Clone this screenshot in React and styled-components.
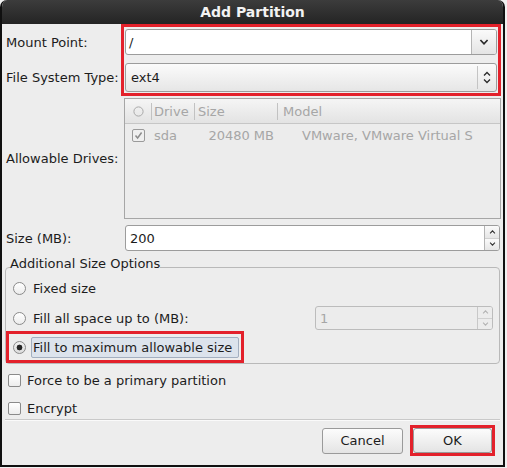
import React from 'react';
import styled, { createGlobalStyle } from 'styled-components';

const GlobalStyle = createGlobalStyle`
  body {
    margin: 0;
    background: #f1f1f1;
    font-family: "DejaVu Sans", "Liberation Sans", sans-serif;
    font-size: 13px;
    color: #1c1c1c;
  }
`;

const RED = '#e3212b';

const Dialog = styled.div`
  width: 505px;
  height: 467px;
  box-sizing: border-box;
  display: flex;
  flex-direction: column;
  border: 2px solid #101010;
  border-top: 0;
  border-radius: 7px 7px 0 0;
  overflow: hidden;
  background: #ededed;
`;

const TitleBar = styled.div`
  height: 24px;
  flex-shrink: 0;
  background: linear-gradient(#3c3c3c, #242424);
  color: #f2f2f2;
  font-weight: bold;
  font-size: 14px;
  line-height: 24px;
  text-align: center;
`;

const Body = styled.div`
  flex: 1;
  display: flex;
  flex-direction: column;
  padding: 0 2px 0 4px;
`;

const TopBlock = styled.div`
  display: flex;
`;

const LabelColumn = styled.div`
  width: 115px;
  display: flex;
  flex-direction: column;
  gap: 8px;
  padding-top: 5px;
`;

const FieldLabel = styled.div`
  height: ${p => p.$h}px;
  width: ${p => (p.$w ? `${p.$w}px` : 'auto')};
  flex-shrink: 0;
  display: flex;
  align-items: center;
  white-space: nowrap;
`;

const Highlight = styled.div`
  flex: 1;
  display: flex;
  flex-direction: column;
  gap: 8px;
  padding: 2px 1px 1px;
  border: 3px solid ${RED};
`;

const ComboEntry = styled.div`
  height: 26px;
  box-sizing: border-box;
  display: flex;
  border: 1px solid #9c9c9c;
  border-radius: 3px;
  background: #fff;
  overflow: hidden;
`;

const EntryText = styled.div`
  flex: 1;
  display: flex;
  align-items: center;
  padding-left: ${p => p.$pad || 3}px;
  color: ${p => (p.$disabled ? '#a6a6a6' : '#1c1c1c')};
`;

const ComboButton = styled.div`
  width: 24px;
  display: flex;
  align-items: center;
  justify-content: center;
  border-left: 1px solid #b4b4b4;
  background: linear-gradient(#fafafa, #e4e4e4);
`;

const ComboBox = styled.div`
  height: 29px;
  box-sizing: border-box;
  display: flex;
  align-items: center;
  border: 1px solid #9c9c9c;
  border-radius: 3px;
  background: linear-gradient(#fbfbfb, #e6e6e6);
`;

const ComboValue = styled.div`
  flex: 1;
  padding-left: 5px;
`;

const ComboArrows = styled.div`
  width: 18px;
  height: 23px;
  display: flex;
  align-items: center;
  justify-content: center;
  border-left: 1px solid #c4c4c4;
`;

const DrivesRow = styled.div`
  display: flex;
  align-items: center;
  margin-top: 2px;
`;

const DriveList = styled.div`
  flex: 1;
  height: 121px;
  margin-left: 3px;
  box-sizing: border-box;
  border: 1px solid #a6a6a6;
  background: #ececec;
  color: #a6a6a6;
`;

const columns = '26px 43px 83px 1fr';

const ListHeader = styled.div`
  height: 25px;
  box-sizing: border-box;
  display: grid;
  grid-template-columns: ${columns};
  align-items: center;
  border-bottom: 1px solid #c6c6c6;
  background: linear-gradient(#f5f5f5, #e3e3e3);
`;

const HeaderCell = styled.div`
  height: 17px;
  display: flex;
  align-items: center;
  justify-content: ${p => (p.$center ? 'center' : 'flex-start')};
  padding-left: ${p => p.$pad || 0}px;
  border-left: ${p => (p.$sep ? '1px solid #c2c2c2' : '0')};
`;

const ListRow = styled.div`
  height: 22px;
  display: grid;
  grid-template-columns: ${columns};
  align-items: center;
`;

const Cell = styled.div`
  display: flex;
  justify-content: ${p => p.$justify || 'flex-start'};
  padding-left: ${p => p.$pl || 0}px;
  padding-right: ${p => p.$pr || 0}px;
  white-space: nowrap;
  overflow: hidden;
`;

const SizeRow = styled.div`
  display: flex;
  align-items: center;
  margin-top: 6px;
`;

const SpinEntry = styled.div`
  height: ${p => p.$h || 26}px;
  width: ${p => (p.$w ? `${p.$w}px` : 'auto')};
  flex: ${p => (p.$w ? '0 0 auto' : 1)};
  box-sizing: border-box;
  display: flex;
  margin: ${p => p.$m || '0'};
  border: 1px solid ${p => (p.$disabled ? '#bcbcbc' : '#9c9c9c')};
  border-radius: 3px;
  background: ${p => (p.$disabled ? '#ececec' : '#fff')};
  overflow: hidden;
`;

const SpinButtons = styled.div`
  width: 14px;
  display: flex;
  flex-direction: column;
  border-left: 1px solid ${p => (p.$disabled ? '#c8c8c8' : '#b4b4b4')};
`;

const SpinHalf = styled.div`
  flex: 1;
  display: flex;
  align-items: center;
  justify-content: center;
  background: ${p => (p.$disabled ? '#ececec' : 'linear-gradient(#fafafa, #e6e6e6)')};
  & + & {
    border-top: 1px solid ${p => (p.$disabled ? '#d0d0d0' : '#c0c0c0')};
  }
`;

const Frame = styled.fieldset`
  margin: 4px 1px 0 -1px;
  padding: 0;
  border: 1px solid #b9b9b9;
  border-radius: 4px;
  display: flex;
  flex-direction: column;
  min-width: 0;
`;

const Legend = styled.legend`
  margin-left: 4px;
  padding: 0 0 6px;
  line-height: 18px;
`;

const RadioRow = styled.div`
  height: ${p => p.$h}px;
  margin-top: ${p => p.$mt || 0}px;
  display: flex;
  align-items: center;
  padding-left: 7px;
  gap: 7px;
`;

const Radio = styled.span`
  width: 13px;
  height: 13px;
  box-sizing: border-box;
  flex-shrink: 0;
  border: 1px solid #8a8a8a;
  border-radius: 50%;
  background: ${p =>
    p.$checked
      ? 'radial-gradient(circle, #262626 0 2.6px, transparent 3.2px), linear-gradient(#f0f0f0, #dcdcdc)'
      : 'linear-gradient(#ffffff, #ececec)'};
`;

const Spacer = styled.div`
  flex: 1;
`;

const FocusBox = styled.div`
  margin-top: 1px;
  align-self: flex-start;
  height: 32px;
  box-sizing: border-box;
  display: flex;
  align-items: center;
  gap: 5px;
  padding: 0 2px 0 4px;
  border: 3px solid ${RED};
`;

const FocusLabel = styled.div`
  height: 21px;
  box-sizing: border-box;
  display: flex;
  align-items: center;
  padding: 0 6px 0 1px;
  border: 1px solid #a3afc0;
  border-radius: 2px;
  background: #dce3ec;
`;

const CheckRow = styled.div`
  height: 20px;
  margin-top: ${p => p.$mt}px;
  display: flex;
  align-items: center;
  gap: 6px;
  padding-left: 2px;
`;

const CheckBox = styled.span`
  width: 13px;
  height: 13px;
  box-sizing: border-box;
  flex-shrink: 0;
  display: flex;
  align-items: center;
  justify-content: center;
  border: 1px solid ${p => (p.$disabled ? '#9a9a9a' : '#8a8a8a')};
  border-radius: 2px;
  background: ${p => (p.$disabled ? '#efefef' : 'linear-gradient(#ffffff, #ededed)')};
`;

const Separator = styled.div`
  height: 1px;
  margin: 1px 1px 0 -1px;
  background: #c9c9c9;
  box-shadow: 0 1px 0 #fafafa;
`;

const ButtonRow = styled.div`
  margin-top: 5px;
  display: flex;
  justify-content: flex-end;
  align-items: center;
  gap: 7px;
  padding-right: 6px;
`;

const Button = styled.button`
  width: ${p => p.$w}px;
  height: ${p => p.$h}px;
  box-sizing: border-box;
  border: 1px solid #9a9a9a;
  border-radius: 3px;
  background: linear-gradient(#fcfcfc, #e4e4e4);
  font: inherit;
  color: #1c1c1c;
  padding: 0;
`;

const ButtonHighlight = styled.div`
  width: 85px;
  height: 31px;
  box-sizing: border-box;
  display: flex;
  border: 3px solid ${RED};
`;

const Chevron = ({ up, color = '#2a2a2a', w = 8, h = 5 }) => (
  <svg width={w} height={h} viewBox="0 0 8 5">
    <polyline
      points={up ? '1,4.2 4,1 7,4.2' : '1,0.8 4,4 7,0.8'}
      fill="none"
      stroke={color}
      strokeWidth="1.4"
    />
  </svg>
);

const SpinControl = ({ value, disabled, ...rest }) => {
  const c = disabled ? '#b4b4b4' : '#333';
  return (
    <SpinEntry $disabled={disabled} {...rest}>
      <EntryText $pad={4} $disabled={disabled}>{value}</EntryText>
      <SpinButtons $disabled={disabled}>
        <SpinHalf $disabled={disabled}><Chevron up color={c} w={7} h={4} /></SpinHalf>
        <SpinHalf $disabled={disabled}><Chevron color={c} w={7} h={4} /></SpinHalf>
      </SpinButtons>
    </SpinEntry>
  );
};

const Tick = () => (
  <svg width="9" height="9" viewBox="0 0 9 9">
    <polyline points="1.5,4.5 3.6,7 7.6,1.5" fill="none" stroke="#8c8c8c" strokeWidth="1.5" />
  </svg>
);

export default function App() {
  return (
    <>
      <GlobalStyle />
      <Dialog>
        <TitleBar>Add Partition</TitleBar>
        <Body>
          <TopBlock>
            <LabelColumn>
              <FieldLabel $h={26}>Mount Point:</FieldLabel>
              <FieldLabel $h={29}>File System Type:</FieldLabel>
            </LabelColumn>
            <Highlight>
              <ComboEntry>
                <EntryText>/</EntryText>
                <ComboButton><Chevron w={10} h={6} /></ComboButton>
              </ComboEntry>
              <ComboBox>
                <ComboValue>ext4</ComboValue>
                <ComboArrows>
                  <svg width="8" height="13" viewBox="0 0 8 13">
                    <polyline points="1,4.5 4,1.5 7,4.5" fill="none" stroke="#2a2a2a" strokeWidth="1.3" />
                    <polyline points="1,8.5 4,11.5 7,8.5" fill="none" stroke="#2a2a2a" strokeWidth="1.3" />
                  </svg>
                </ComboArrows>
              </ComboBox>
            </Highlight>
          </TopBlock>

          <DrivesRow>
            <FieldLabel $h={20} $w={115}>Allowable Drives:</FieldLabel>
            <DriveList>
              <ListHeader>
                <HeaderCell $center>
                  <svg width="11" height="11" viewBox="0 0 11 11">
                    <circle cx="5.5" cy="5.5" r="4.6" fill="none" stroke="#a8a8a8" strokeWidth="1" />
                  </svg>
                </HeaderCell>
                <HeaderCell $sep $pad={2}>Drive</HeaderCell>
                <HeaderCell $sep $pad={3}>Size</HeaderCell>
                <HeaderCell $sep $pad={5}>Model</HeaderCell>
              </ListHeader>
              <ListRow>
                <Cell $justify="center">
                  <CheckBox $disabled><Tick /></CheckBox>
                </Cell>
                <Cell $pl={3}>sda</Cell>
                <Cell $justify="flex-end" $pr={3}>20480 MB</Cell>
                <Cell $pl={25}>VMware, VMware Virtual S</Cell>
              </ListRow>
            </DriveList>
          </DrivesRow>

          <SizeRow>
            <FieldLabel $h={20} $w={115}>Size (MB):</FieldLabel>
            <SpinControl value="200" $m="0 1px 0 4px" />
          </SizeRow>

          <Frame>
            <Legend>Additional Size Options</Legend>
            <RadioRow $h={18}>
              <Radio />
              Fixed size
            </RadioRow>
            <RadioRow $h={24} $mt={9}>
              <Radio />
              Fill all space up to (MB):
              <Spacer />
              <SpinControl value="1" disabled $w={178} $h={24} $m="0 6px 0 0" />
            </RadioRow>
            <FocusBox>
              <Radio $checked />
              <FocusLabel>Fill to maximum allowable size</FocusLabel>
            </FocusBox>
          </Frame>

          <CheckRow $mt={6}>
            <CheckBox />
            Force to be a primary partition
          </CheckRow>
          <CheckRow $mt={8}>
            <CheckBox />
            Encrypt
          </CheckRow>

          <Separator />

          <ButtonRow>
            <Button $w={81} $h={26}>Cancel</Button>
            <ButtonHighlight>
              <Button $w={79} $h={25}>OK</Button>
            </ButtonHighlight>
          </ButtonRow>
        </Body>
      </Dialog>
    </>
  );
}
